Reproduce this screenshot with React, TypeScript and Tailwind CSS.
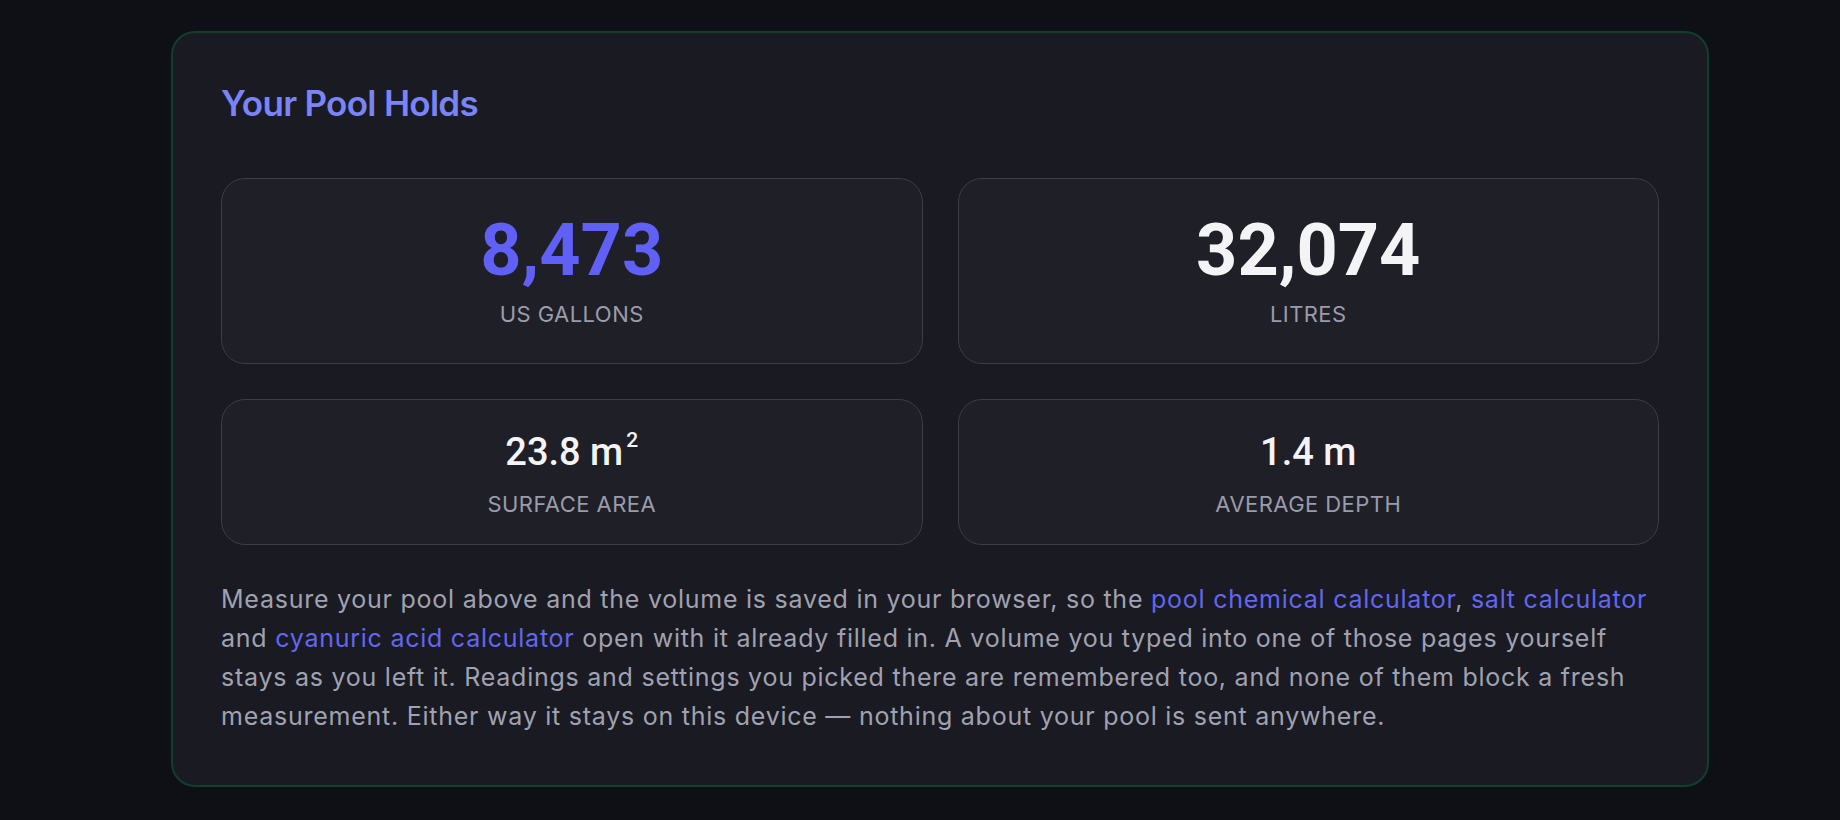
import React from "react";

const body = { fontFamily: "Inter, 'Noto Sans', sans-serif" };
const nums = { fontFamily: "Roboto, 'Liberation Sans', sans-serif" };

function BigStat({ value, label, accent }: { value: string; label: string; accent?: boolean }) {
  return (
    <div className="flex flex-col items-center rounded-3xl border border-[#3d3e43] bg-[#1e1f27] pt-[36px] pb-[35px]">
      <div
        style={nums}
        className={`text-[72px] font-bold leading-none ${accent ? "text-[#6060f7]" : "text-[#f4f4f7]"}`}
      >
        {value}
      </div>
      <div className="mt-[13px] text-[22px] leading-[28px] tracking-[0.02em] uppercase text-[#9a9cab]">{label}</div>
    </div>
  );
}

function SmallStat({ children, label }: { children: React.ReactNode; label: string }) {
  return (
    <div className="flex flex-col items-center rounded-3xl border border-[#3d3e43] bg-[#1e1f27] pt-[33px] pb-[26px]">
      <div style={nums} className="text-[38px] font-medium leading-none text-[#f4f4f7]">
        {children}
      </div>
      <div className="mt-[19px] text-[22px] leading-[28px] tracking-[0.02em] uppercase text-[#9a9cab]">{label}</div>
    </div>
  );
}

export default function App() {
  return (
    <div style={body} className="min-h-[820px] w-full bg-[#0f1015] pt-[31px]">
      <section className="ml-[171px] w-[1538px] rounded-3xl border-2 border-[#123f2d] bg-[#191a22] px-[48px] pt-[49px] pb-[49px]">
        <h2 className="text-[35px] font-semibold leading-[42px] tracking-[-0.02em] text-[#7b84f6]">
          Your Pool Holds
        </h2>

        <div className="mt-[54px] grid grid-cols-2 gap-[35px]">
          <BigStat value="8,473" label="US Gallons" accent />
          <BigStat value="32,074" label="Litres" />
          <SmallStat label="Surface Area">
            23.8 m<span className="relative -top-[18px] ml-[3px] text-[21px]">2</span>
          </SmallStat>
          <SmallStat label="Average Depth">1.4 m</SmallStat>
        </div>

        <p className="mt-[35px] text-[25px] leading-[39px] tracking-[0.03em] text-[#a0a2b1]">
          Measure your pool above and the volume is saved in your browser, so the{" "}
          <a href="#" className="text-[#6366f1]">pool chemical calculator</a>,{" "}
          <a href="#" className="text-[#6366f1]">salt calculator</a>
          <br />
          and <a href="#" className="text-[#6366f1]">cyanuric acid calculator</a> open with it already filled in. A
          volume you typed into one of those pages yourself
          <br />
          stays as you left it. Readings and settings you picked there are remembered too, and none of them block a
          fresh
          <br />
          measurement. Either way it stays on this device — nothing about your pool is sent anywhere.
        </p>
      </section>
    </div>
  );
}
